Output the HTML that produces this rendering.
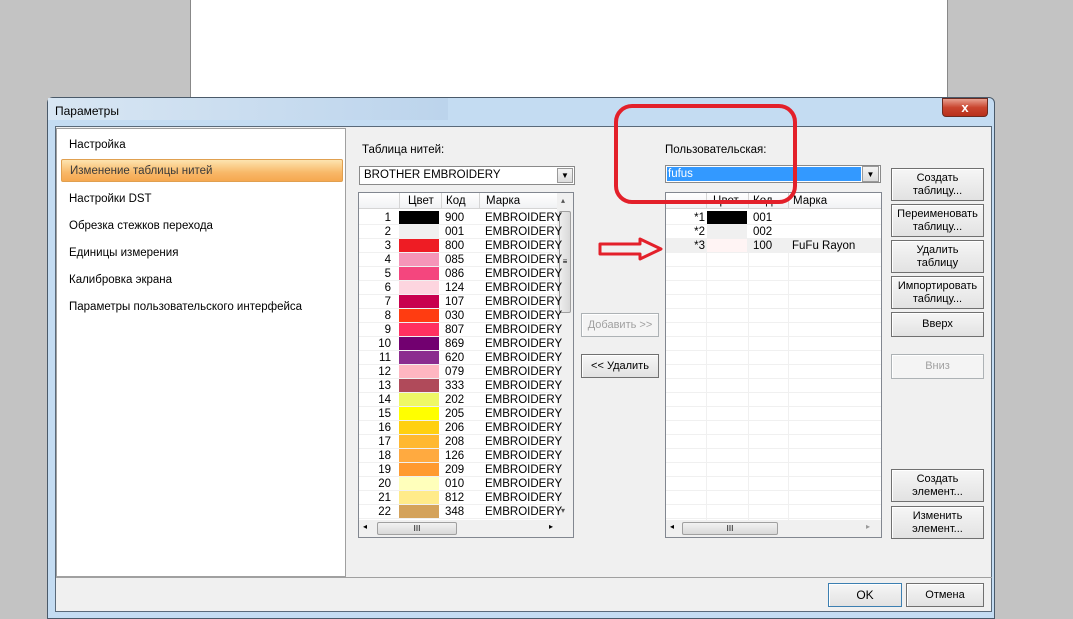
<!DOCTYPE html>
<html><head><meta charset="utf-8"><style>
*{box-sizing:border-box;margin:0;padding:0}
body{width:1073px;height:619px;overflow:hidden;background:#c3c3c3;font-family:"Liberation Sans",sans-serif;font-size:11px;color:#000;position:relative}
.a{position:absolute}
.btn{position:absolute;background:linear-gradient(#f6f6f6,#e2e2e2);border:1px solid #707070;box-shadow:inset 1px 1px 0 #fff;text-align:center;font-size:11px;line-height:13px;display:flex;align-items:center;justify-content:center;flex-direction:column}
.dis{color:#a0a0a0;border-color:#adb2b5;background:#f4f4f4}
.tbl{position:absolute;background:#fff;border:1px solid #828790}
.row{position:absolute;left:0;height:14px;line-height:14px;border-bottom:1px solid #f0f0f0;font-size:11.5px}
.row span{position:absolute;top:0}
.hdr{position:absolute;top:0;left:0;height:16px;background:linear-gradient(#fff,#f1f2f4);border-bottom:1px solid #d5d5d5;line-height:16px;font-size:11.5px}
.hdr span{position:absolute;top:0;border-left:1px solid #d5d5d5;padding-left:4px;height:16px}
.menu div{height:27px;line-height:27px;padding-left:12px;font-size:11.5px}
</style></head><body>
<div class="a" style="left:190px;top:0;width:758px;height:97px;background:#fff;border-left:1px solid #888;border-right:1px solid #888"></div>
<div class="a" style="left:47px;top:97px;width:948px;height:522px;background:#c4dcf2;border:1px solid #4a5a6a;border-radius:6px 6px 0 0"></div>
<div class="a" style="left:48px;top:98px;width:400px;height:22px;background:linear-gradient(90deg,#d8e6f3,#bcd4ec)"></div>
<div class="a" style="left:55px;top:104px;font-size:12px">Параметры</div>
<div class="a" style="left:942px;top:98px;width:46px;height:19px;background:linear-gradient(#e8a090,#c9442e 50%,#b8301c);border:1px solid #6b2a20;border-radius:0 0 4px 4px;color:#fff;font-weight:bold;text-align:center;line-height:17px;font-size:13px">x</div>
<div class="a" style="left:55px;top:126px;width:937px;height:486px;background:#f0f0f0;border:1px solid #5a6a7a"></div>
<div class="a menu" style="left:56px;top:128px;width:290px;height:449px;background:#fff;border:1px solid #a0a0a0;padding-top:3px">
<div>Настройка</div>
<div style="margin:0 2px 0 4px;padding-left:8px;height:23px;line-height:23px;background:linear-gradient(#fde4b0,#f8b868 60%,#f6a850);border:1px solid #e0a050;border-radius:2px;color:#3a3a3a;margin-bottom:4px">Изменение таблицы нитей</div>
<div>Настройки DST</div>
<div>Обрезка стежков перехода</div>
<div>Единицы измерения</div>
<div>Калибровка экрана</div>
<div>Параметры пользовательского интерфейса</div>
</div>
<div class="a" style="left:56px;top:577px;width:936px;height:1px;background:#a0a0a0"></div>
<div class="a" style="left:362px;top:144px;font-size:11.5px">Таблица нитей:</div>
<div class="a" style="left:359px;top:166px;width:216px;height:19px;background:#fff;border:1px solid #8a8a8a;line-height:17px;padding-left:4px;font-size:11.5px">BROTHER EMBROIDERY</div>
<div class="a" style="left:557px;top:168px;width:16px;height:15px;background:linear-gradient(#f4f4f4,#dcdcdc);border:1px solid #999;font-size:8px;text-align:center;line-height:14px">▼</div>
<div class="a" style="left:665px;top:144px;font-size:11.5px">Пользовательская:</div>
<div class="a" style="left:665px;top:165px;width:216px;height:18px;background:#fff;border:1px solid #8a8a8a"></div>
<div class="a" style="left:667px;top:167px;width:194px;height:14px;background:#3399ff;color:#fff;line-height:14px;padding-left:1px;font-size:11.5px">fufus</div>
<div class="a" style="left:862px;top:166px;width:17px;height:16px;background:linear-gradient(#f4f4f4,#dcdcdc);border:1px solid #999;font-size:8px;text-align:center;line-height:15px">▼</div>

<div class="tbl" style="left:358px;top:192px;width:216px;height:346px">
<div class="hdr" style="width:198px"><span style="left:40px;width:42px;padding-left:8px">Цвет</span><span style="left:82px;width:38px">Код</span><span style="left:120px;width:78px;padding-left:6px">Марка</span></div>
<div class="a" style="left:198px;top:0;width:16px;height:327px;background:#f0f0f0"></div>
<div class="a" style="left:200px;top:18px;width:12px;height:102px;background:linear-gradient(90deg,#eee,#d8d8d8);border:1px solid #a0a0a0;border-radius:2px;font-size:8px;text-align:center;line-height:100px">≡</div>
<div class="a" style="left:0;top:327px;width:214px;height:17px;background:#f0f0f0"></div>
<div class="a" style="left:18px;top:329px;width:80px;height:13px;background:linear-gradient(#f2f2f2,#d8d8d8);border:1px solid #a0a0a0;border-radius:2px;font-size:8px;text-align:center;line-height:11px">III</div>
<div class="a" style="left:4px;top:329px;font-size:8px">◂</div><div class="a" style="left:190px;top:329px;font-size:8px">▸</div>
<div class="a" style="left:202px;top:313px;font-size:8px;color:#555">▾</div>
<div class="a" style="left:202px;top:3px;font-size:8px;color:#555">▴</div>
</div>
<div class="a" style="left:359px;top:211px;width:198px">
<div class="row" style="top:0;width:198px"><span style="right:166px">1</span><span style="left:40px;width:40px;height:13px;background:#000"></span><span style="left:86px">900</span><span style="left:126px">EMBROIDERY</span></div>
<div class="row" style="top:14px;width:198px"><span style="right:166px">2</span><span style="left:40px;width:40px;height:13px;background:#f0f0f0"></span><span style="left:86px">001</span><span style="left:126px">EMBROIDERY</span></div>
<div class="row" style="top:28px;width:198px"><span style="right:166px">3</span><span style="left:40px;width:40px;height:13px;background:#ee1c24"></span><span style="left:86px">800</span><span style="left:126px">EMBROIDERY</span></div>
<div class="row" style="top:42px;width:198px"><span style="right:166px">4</span><span style="left:40px;width:40px;height:13px;background:#f595b8"></span><span style="left:86px">085</span><span style="left:126px">EMBROIDERY</span></div>
<div class="row" style="top:56px;width:198px"><span style="right:166px">5</span><span style="left:40px;width:40px;height:13px;background:#f4467e"></span><span style="left:86px">086</span><span style="left:126px">EMBROIDERY</span></div>
<div class="row" style="top:70px;width:198px"><span style="right:166px">6</span><span style="left:40px;width:40px;height:13px;background:#fdd5df"></span><span style="left:86px">124</span><span style="left:126px">EMBROIDERY</span></div>
<div class="row" style="top:84px;width:198px"><span style="right:166px">7</span><span style="left:40px;width:40px;height:13px;background:#c8004e"></span><span style="left:86px">107</span><span style="left:126px">EMBROIDERY</span></div>
<div class="row" style="top:98px;width:198px"><span style="right:166px">8</span><span style="left:40px;width:40px;height:13px;background:#ff3c11"></span><span style="left:86px">030</span><span style="left:126px">EMBROIDERY</span></div>
<div class="row" style="top:112px;width:198px"><span style="right:166px">9</span><span style="left:40px;width:40px;height:13px;background:#ff3060"></span><span style="left:86px">807</span><span style="left:126px">EMBROIDERY</span></div>
<div class="row" style="top:126px;width:198px"><span style="right:166px">10</span><span style="left:40px;width:40px;height:13px;background:#720070"></span><span style="left:86px">869</span><span style="left:126px">EMBROIDERY</span></div>
<div class="row" style="top:140px;width:198px"><span style="right:166px">11</span><span style="left:40px;width:40px;height:13px;background:#8b2c8f"></span><span style="left:86px">620</span><span style="left:126px">EMBROIDERY</span></div>
<div class="row" style="top:154px;width:198px"><span style="right:166px">12</span><span style="left:40px;width:40px;height:13px;background:#ffb6c1"></span><span style="left:86px">079</span><span style="left:126px">EMBROIDERY</span></div>
<div class="row" style="top:168px;width:198px"><span style="right:166px">13</span><span style="left:40px;width:40px;height:13px;background:#b04a5a"></span><span style="left:86px">333</span><span style="left:126px">EMBROIDERY</span></div>
<div class="row" style="top:182px;width:198px"><span style="right:166px">14</span><span style="left:40px;width:40px;height:13px;background:#eef866"></span><span style="left:86px">202</span><span style="left:126px">EMBROIDERY</span></div>
<div class="row" style="top:196px;width:198px"><span style="right:166px">15</span><span style="left:40px;width:40px;height:13px;background:#ffff00"></span><span style="left:86px">205</span><span style="left:126px">EMBROIDERY</span></div>
<div class="row" style="top:210px;width:198px"><span style="right:166px">16</span><span style="left:40px;width:40px;height:13px;background:#ffd010"></span><span style="left:86px">206</span><span style="left:126px">EMBROIDERY</span></div>
<div class="row" style="top:224px;width:198px"><span style="right:166px">17</span><span style="left:40px;width:40px;height:13px;background:#ffb830"></span><span style="left:86px">208</span><span style="left:126px">EMBROIDERY</span></div>
<div class="row" style="top:238px;width:198px"><span style="right:166px">18</span><span style="left:40px;width:40px;height:13px;background:#ffaa40"></span><span style="left:86px">126</span><span style="left:126px">EMBROIDERY</span></div>
<div class="row" style="top:252px;width:198px"><span style="right:166px">19</span><span style="left:40px;width:40px;height:13px;background:#ff9a30"></span><span style="left:86px">209</span><span style="left:126px">EMBROIDERY</span></div>
<div class="row" style="top:266px;width:198px"><span style="right:166px">20</span><span style="left:40px;width:40px;height:13px;background:#ffffbb"></span><span style="left:86px">010</span><span style="left:126px">EMBROIDERY</span></div>
<div class="row" style="top:280px;width:198px"><span style="right:166px">21</span><span style="left:40px;width:40px;height:13px;background:#ffeb8a"></span><span style="left:86px">812</span><span style="left:126px">EMBROIDERY</span></div>
<div class="row" style="top:294px;width:198px"><span style="right:166px">22</span><span style="left:40px;width:40px;height:13px;background:#d4a25a"></span><span style="left:86px">348</span><span style="left:126px">EMBROIDERY</span></div>
</div>

<div class="tbl" style="left:665px;top:192px;width:217px;height:346px">
<div class="hdr" style="width:215px"><span style="left:40px;width:42px;padding-left:6px">Цвет</span><span style="left:82px;width:40px">Код</span><span style="left:122px;width:93px">Марка</span></div>
<div class="a" style="left:0;top:327px;width:215px;height:17px;background:#f0f0f0"></div>
<div class="a" style="left:16px;top:329px;width:96px;height:13px;background:linear-gradient(#f2f2f2,#d8d8d8);border:1px solid #a0a0a0;border-radius:2px;font-size:8px;text-align:center;line-height:11px">III</div>
<div class="a" style="left:4px;top:329px;font-size:8px">◂</div><div class="a" style="left:200px;top:329px;font-size:8px;color:#999">▸</div>
</div>
<div class="a" style="left:666px;top:211px;width:215px">
<div class="row" style="top:0;width:215px"><span style="right:176px">*1</span><span style="left:41px;width:40px;height:13px;background:#000"></span><span style="left:87px">001</span></div>
<div class="row" style="top:14px;width:215px"><span style="right:176px">*2</span><span style="left:41px;width:40px;height:13px;background:#f0f0f0"></span><span style="left:87px">002</span></div>
<div class="row" style="top:28px;width:215px;background:#f0f0f0"><span style="right:176px">*3</span><span style="left:41px;width:40px;height:13px;background:#fff4f4"></span><span style="left:87px">100</span><span style="left:126px">FuFu Rayon</span></div>
</div>
<div class="a" style="left:666px;top:253px;width:215px;height:267px;background:repeating-linear-gradient(#fff 0,#fff 13px,#f0f0f0 13px,#f0f0f0 14px)"></div>
<div class="a" style="left:706px;top:253px;width:1px;height:267px;background:#f0f0f0"></div>
<div class="a" style="left:748px;top:253px;width:1px;height:267px;background:#f0f0f0"></div>
<div class="a" style="left:788px;top:253px;width:1px;height:267px;background:#f0f0f0"></div>

<div class="btn dis" style="left:581px;top:313px;width:78px;height:24px">Добавить &gt;&gt;</div>
<div class="btn" style="left:581px;top:354px;width:78px;height:24px">&lt;&lt; Удалить</div>
<div class="btn" style="left:891px;top:168px;width:93px;height:33px">Создать<br>таблицу...</div>
<div class="btn" style="left:891px;top:204px;width:93px;height:33px">Переименовать<br>таблицу...</div>
<div class="btn" style="left:891px;top:240px;width:93px;height:33px">Удалить<br>таблицу</div>
<div class="btn" style="left:891px;top:276px;width:93px;height:33px">Импортировать<br>таблицу...</div>
<div class="btn" style="left:891px;top:312px;width:93px;height:25px">Вверх</div>
<div class="btn dis" style="left:891px;top:354px;width:93px;height:25px">Вниз</div>
<div class="btn" style="left:891px;top:469px;width:93px;height:33px">Создать<br>элемент...</div>
<div class="btn" style="left:891px;top:506px;width:93px;height:33px">Изменить<br>элемент...</div>
<div class="btn" style="left:828px;top:583px;width:74px;height:24px;border-color:#3c7fb1;font-size:12px">OK</div>
<div class="btn" style="left:906px;top:583px;width:78px;height:24px">Отмена</div>

<svg class="a" style="left:0;top:0" width="1073" height="619">
<rect x="616" y="106" width="179" height="96" rx="16" fill="none" stroke="#e3202a" stroke-width="4"/>
<path d="M600 244 L640 244 L640 239 L661 249 L640 259 L640 254 L600 254 Z" fill="none" stroke="#e3202a" stroke-width="3" stroke-linejoin="round"/>
</svg>
</body></html>
